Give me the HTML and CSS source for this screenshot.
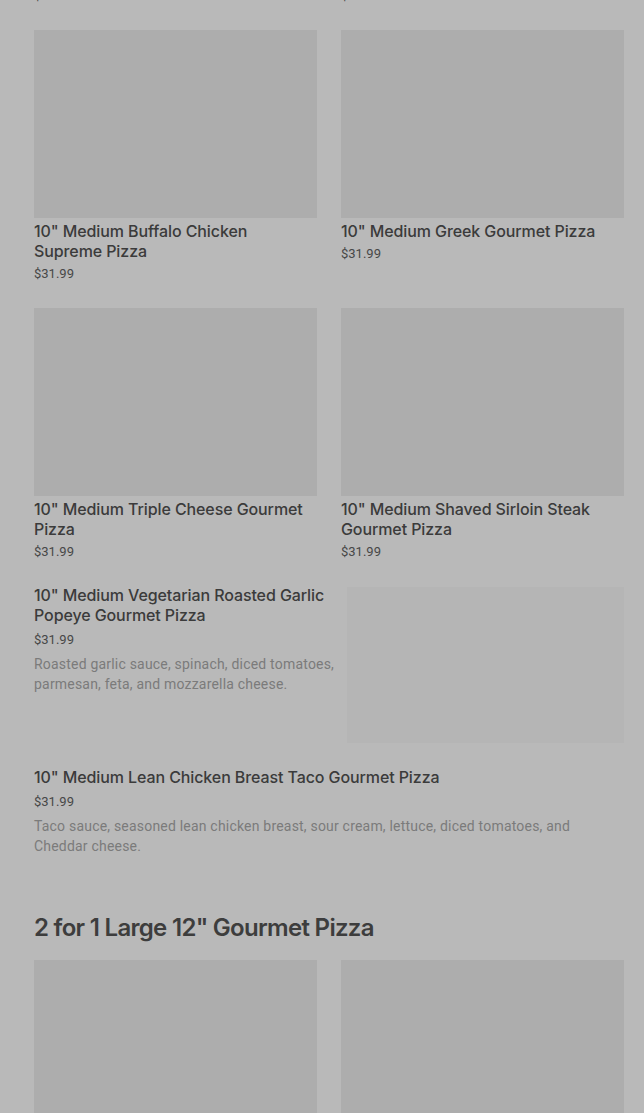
FILE: index.html
```html
<!DOCTYPE html>
<html>
<head>
<meta charset="utf-8">
<link rel="stylesheet" href="styles.css">
</head>
<body>
<main class="page">
  <div class="grid tail">
    <div class="price">$31.99</div>
    <div class="price">$31.99</div>
  </div>

  <div class="grid">
    <div class="card">
      <div class="thumb"></div>
      <div class="title">10" Medium Buffalo Chicken Supreme Pizza</div>
      <div class="price">$31.99</div>
    </div>
    <div class="card">
      <div class="thumb"></div>
      <div class="title">10" Medium Greek Gourmet Pizza</div>
      <div class="price">$31.99</div>
    </div>
    <div class="card">
      <div class="thumb"></div>
      <div class="title">10" Medium Triple Cheese Gourmet Pizza</div>
      <div class="price">$31.99</div>
    </div>
    <div class="card">
      <div class="thumb"></div>
      <div class="title">10" Medium Shaved Sirloin Steak Gourmet Pizza</div>
      <div class="price">$31.99</div>
    </div>
  </div>

  <div class="item with-img">
    <div class="item-text">
      <div class="title">10" Medium Vegetarian Roasted Garlic Popeye Gourmet Pizza</div>
      <div class="price item-price">$31.99</div>
      <div class="desc">Roasted garlic sauce, spinach, diced tomatoes, parmesan, feta, and mozzarella cheese.</div>
    </div>
    <div class="item-img"></div>
  </div>

  <div class="item">
    <div class="item-text">
      <div class="title">10" Medium Lean Chicken Breast Taco Gourmet Pizza</div>
      <div class="price item-price">$31.99</div>
      <div class="desc">Taco sauce, seasoned lean chicken breast, sour cream, lettuce, diced tomatoes, and Cheddar cheese.</div>
    </div>
  </div>

  <h2 class="section">2 for 1 Large 12" Gourmet Pizza</h2>

  <div class="grid">
    <div class="card"><div class="thumb"></div></div>
    <div class="card"><div class="thumb"></div></div>
  </div>
</main>
</body>
</html>
```

FILE: styles.css
```css
html, body {
  margin: 0;
  padding: 0;
  background: #b9b9b9;
  overflow: hidden;
}
body {
  font-family: "Inter", "Liberation Sans", sans-serif;
  color: #3b3b3b;
}
.page {
  padding: 0 20px 0 34px;
}
.grid {
  display: grid;
  grid-template-columns: 283px 283px;
  column-gap: 24px;
  row-gap: 24px;
}
.tail {
  margin-top: -14px;
  margin-bottom: 24px;
}
.card {
  display: flex;
  flex-direction: column;
}
.thumb {
  height: 188px;
  background: #adadad;
}
.title {
  font-size: 16px;
  line-height: 20px;
  font-weight: 500;
  color: #3b3b3b;
  letter-spacing: -0.1px;
}
.card .title {
  margin-top: 3px;
}
.price {
  font-family: "Roboto", "Liberation Sans", sans-serif;
  font-size: 13px;
  line-height: 20px;
  color: #474747;
  margin-top: 4px;
}
.card .price {
  margin-top: 3px;
}
.tail .price {
  margin-top: 0;
}
.item {
  display: flex;
  gap: 10px;
  margin-top: 23px;
}
.item-text {
  flex: 1;
  min-width: 0;
}
.item-price {
  margin-top: 5px;
}
.desc {
  font-family: "Roboto", "Liberation Sans", sans-serif;
  font-size: 14px;
  line-height: 20px;
  color: #7b7b7b;
  letter-spacing: 0.2px;
  margin-top: 4px;
}
.item-img {
  width: 277px;
  height: 156px;
  margin-top: 2px;
  background: #b5b5b5;
  flex-shrink: 0;
}
.with-img + .item {
  margin-top: 24px;
}
.section {
  margin: 56px 0 16px;
  font-size: 24px;
  line-height: 32px;
  font-weight: 600;
  color: #3d3d3d;
  letter-spacing: -0.7px;
}
```
